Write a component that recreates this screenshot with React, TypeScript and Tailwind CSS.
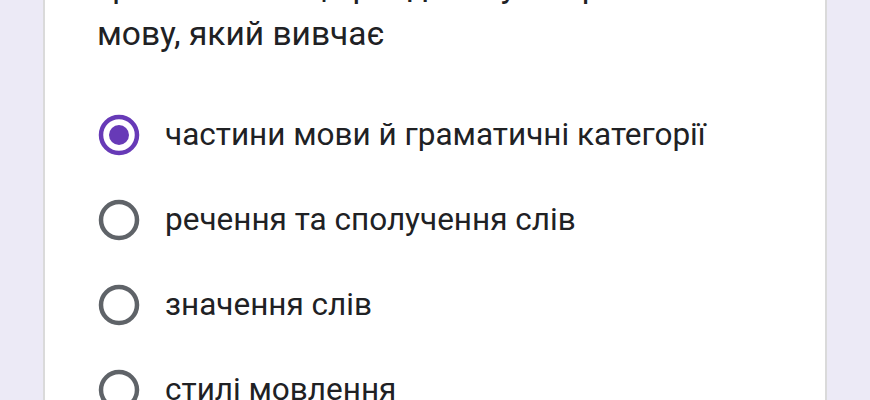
import React from "react";

const options = [
  "частини мови й граматичні категорії",
  "речення та сполучення слів",
  "значення слів",
  "стилі мовлення",
];

function Radio({ checked }: { checked: boolean }) {
  return (
    <svg width="44" height="44" viewBox="0 0 44 44" className="shrink-0">
      <circle
        cx="22"
        cy="22"
        r="18"
        fill="none"
        stroke={checked ? "#673ab7" : "#5f6368"}
        strokeWidth="4.5"
      />
      {checked && <circle cx="22" cy="22" r="10" fill="#673ab7" />}
    </svg>
  );
}

export default function App() {
  return (
    <div className="w-[870px] h-[400px] overflow-hidden bg-[#eceaf6] flex">
      <div className="ml-[43px] w-[784px] h-full bg-white border-x-2 border-[#dadada] pl-[52px] font-['Roboto',sans-serif] text-[#202124]">
        <div className="mt-[-38px] text-[33.5px] leading-[48px]">
          <div>Граматика — це розділ науки про</div>
          <div>мову, який вивчає</div>
        </div>
        <div className="mt-[34px] flex flex-col">
          {options.map((o, i) => (
            <div key={i} className="h-[85px] flex items-center gap-[24px]">
              <Radio checked={i === 0} />
              <span className="text-[31.5px]">{o}</span>
            </div>
          ))}
        </div>
      </div>
    </div>
  );
}
